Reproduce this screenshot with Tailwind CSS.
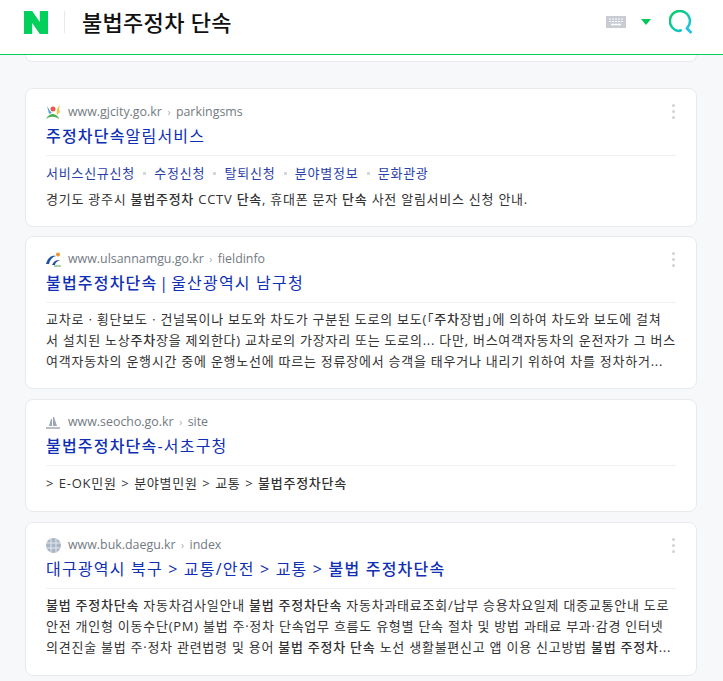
<!DOCTYPE html>
<html lang="ko">

<head>
    <meta charset="UTF-8" />
    <meta name="viewport" content="width=device-width, initial-scale=1.0" />
    <title>불법주정차 단속</title>
    <script src="https://cdn.jsdelivr.net/npm/@tailwindcss/browser@4"></script>
</head>

<body class="bg-[#f7f8fa] h-[681px] overflow-hidden font-['Open_Sans','Noto_Sans_CJK_KR',sans-serif] text-[#333]">

    <!-- Header -->
    <header class="h-[55px] bg-white border-b border-[#03cf5d] flex items-center pl-[24px] pr-[30px] pb-[10px]">
        <svg class="w-[24px] h-[23px]" viewBox="0 0 24 23"><path d="M0 0h8.2l7.6 11V0H24v23h-8.200L8.200 12v11H0z" fill="#03cf5d" /></svg>
        <div class="w-px h-[22px] bg-[#e8e9eb] ml-[16px] mr-[17px]"></div>
        <h1 class="text-[22px] font-medium text-[#111] tracking-[0.3px] flex-1">불법주정차 단속</h1>
        <svg class="w-[20px] h-[12px] mr-[15px]" viewBox="0 0 20 12">
            <rect width="20" height="12" fill="#c9ccd2" />
            <path d="M3 3h14M3 5.500h14" stroke="#fff" stroke-width="1" stroke-dasharray="2 1" />
            <path d="M5 8.500h10" stroke="#fff" stroke-width="1.500" />
        </svg>
        <svg class="w-[10px] h-[6px] mr-[18px]" viewBox="0 0 10 6"><path d="M0 0h10L5 6z" fill="#03c75a" /></svg>
        <svg class="w-[24px] h-[24px]" viewBox="0 0 24 24">
            <defs>
                <linearGradient id="searchGrad" x1="0" y1="0" x2="1" y2="1">
                    <stop offset="0" stop-color="#03cf5d" />
                    <stop offset="1" stop-color="#1ec0e8" />
                </linearGradient>
            </defs>
            <path d="M11 21A10 10 0 1 1 18.500 17.500" fill="none" stroke="url(#searchGrad)" stroke-width="2.500" />
            <circle cx="11.500" cy="20.500" r="1.400" fill="#16c4b0" />
            <path d="M17 17.500l5.500 5.500" stroke="#1ec0e8" stroke-width="2.500" />
        </svg>
    </header>

    <main class="pl-[25px] pr-[26px]">
        <!-- Card scrolled off the top -->
        <div class="h-[7px] bg-white border border-t-0 border-[#e8eaee] rounded-b-[8px]"></div>

        <!-- gjcity -->
        <section class="relative h-[139px] mt-[26px] bg-white border border-[#e8eaee] rounded-[8px] pt-[13px] px-[20px]">
            <div class="flex items-center h-[20px] text-[12.400px] text-[#737a82]">
                <svg class="w-[15px] h-[15px] mr-[7px]" viewBox="0 0 15 15">
                    <path d="M1 1c2 3 3 5 5 7L3 9z" fill="#5aa9d6" />
                    <path d="M14 0c-3 3-4 6-3 10l3-3c-1-2-1-4 0-7z" fill="#e8c84a" />
                    <circle cx="7" cy="4" r="2.500" fill="#e8584f" />
                    <path d="M0 14c3-5 8-7 12-2 1 1 1 2 1 2-4-3-9-3-13 0z" fill="#4caf50" />
                </svg>
                <span>www.gjcity.go.kr</span><span class="mx-[5.500px] text-[10px] text-[#aaa]">›</span><span>parkingsms</span>
            </div>
            <h2 class="mt-[2px] text-[16px] leading-[24px] text-[#0f2fb5] tracking-[1.2px]"><b class="font-medium">주정차단속</b>알림서비스</h2>
            <div class="mt-[7px] border-t border-[#f0f1f3] pt-[4px] flex items-center h-[32px] text-[13px] text-[#2b3fa8] tracking-[0.75px]">
                <span>서비스신규신청</span><i class="w-[3px] h-[3px] bg-[#d5d7db] mx-[8.200px]"></i>
                <span>수정신청</span><i class="w-[3px] h-[3px] bg-[#d5d7db] mx-[8.200px]"></i>
                <span>탈퇴신청</span><i class="w-[3px] h-[3px] bg-[#d5d7db] mx-[8.200px]"></i>
                <span>분야별정보</span><i class="w-[3px] h-[3px] bg-[#d5d7db] mx-[8.200px]"></i>
                <span>문화관광</span>
            </div>
            <p class="text-[13px] leading-[24px] tracking-[0.75px] whitespace-nowrap">경기도 광주시 <b class="font-medium">불법주정차</b> CCTV <b class="font-medium">단속</b>, 휴대폰 문자 <b class="font-medium">단속</b> 사전 알림서비스 신청 안내.</p>
            <div class="absolute right-[21px] top-[15px] flex flex-col gap-[3px]"><i class="w-[3px] h-[3px] rounded-full bg-[#d0d2d6]"></i><i class="w-[3px] h-[3px] rounded-full bg-[#d0d2d6]"></i><i class="w-[3px] h-[3px] rounded-full bg-[#d0d2d6]"></i></div>
        </section>

        <!-- ulsannamgu -->
        <section class="relative h-[153px] mt-[9px] bg-white border border-[#e8eaee] rounded-[8px] pt-[12px] px-[20px]">
            <div class="flex items-center h-[20px] text-[12.400px] text-[#737a82]">
                <svg class="w-[15px] h-[15px] mr-[7px]" viewBox="0 0 15 15">
                    <path d="M0 12C2 5 6 3 10 4 6 5 4 8 3 12z" fill="#1f4fa0" />
                    <path d="M6 13c2-4 4-5 8-5-3 1-5 3-5 5z" fill="#1f4fa0" />
                    <circle cx="12" cy="2.500" r="2" fill="#f0932b" />
                    <path d="M8 14h7" stroke="#4caf50" />
                </svg>
                <span>www.ulsannamgu.go.kr</span><span class="mx-[5.500px] text-[10px] text-[#aaa]">›</span><span>fieldinfo</span>
            </div>
            <h2 class="mt-[2px] text-[16px] leading-[24px] text-[#0f2fb5] tracking-[1.2px]"><b class="font-medium">불법주정차단속</b><span class="[word-spacing:-3.500px]"> | 울산광역시</span> 남구청</h2>
            <div class="mt-[7px] border-t border-[#f0f1f3] pt-[6px] text-[13px] leading-[21px] tracking-[0.75px] whitespace-nowrap">
                <p>교차로ㆍ횡단보도ㆍ건널목이나 보도와 차도가 구분된 도로의 보도(｢<b class="font-medium">주차</b>장법｣에 의하여 차도와 보도에 걸쳐</p>
                <p>서 설치된 노상<b class="font-medium">주차</b>장을 제외한다) 교차로의 가장자리 또는 도로의... 다만, 버스여객자동차의 운전자가 그 버스</p>
                <p>여객자동차의 운행시간 중에 운행노선에 따르는 정류장에서 승객을 태우거나 내리기 위하여 차를 정차하거...</p>
            </div>
            <div class="absolute right-[21px] top-[15px] flex flex-col gap-[3px]"><i class="w-[3px] h-[3px] rounded-full bg-[#d0d2d6]"></i><i class="w-[3px] h-[3px] rounded-full bg-[#d0d2d6]"></i><i class="w-[3px] h-[3px] rounded-full bg-[#d0d2d6]"></i></div>
        </section>

        <!-- seocho -->
        <section class="relative h-[113px] mt-[10px] bg-white border border-[#e8eaee] rounded-[8px] pt-[12px] px-[20px]">
            <div class="flex items-center h-[20px] text-[12.400px] text-[#737a82]">
                <svg class="w-[15px] h-[15px] mr-[7px]" viewBox="0 0 15 15">
                    <path d="M3 11l2-7h1v7zM7 11V2l1 0 3 9z" fill="#9aa6b8" />
                    <path d="M0 13h14" stroke="#b9bec6" stroke-width="2" />
                </svg>
                <span>www.seocho.go.kr</span><span class="mx-[5.500px] text-[10px] text-[#aaa]">›</span><span>site</span>
            </div>
            <h2 class="mt-[2px] text-[16px] leading-[24px] text-[#0f2fb5] tracking-[1.2px]"><b class="font-medium">불법주정차단속</b>-서초구청</h2>
            <div class="mt-[7px] border-t border-[#f0f1f3] pt-[5px] text-[13px] leading-[24px] tracking-[0.75px] [word-spacing:0.500px] whitespace-nowrap">&gt; E-OK민원 &gt; 분야별민원 &gt; 교통 &gt; <b class="font-medium">불법주정차단속</b></div>
        </section>

        <!-- buk.daegu -->
        <section class="relative h-[154px] mt-[10px] bg-white border border-[#e8eaee] rounded-[8px] pt-[12px] px-[20px]">
            <div class="flex items-center h-[20px] text-[12.400px] text-[#737a82]">
                <svg class="w-[15px] h-[15px] mr-[7px]" viewBox="0 0 15 15">
                    <circle cx="7.500" cy="7.500" r="7.500" fill="#a9b6c6" />
                    <path d="M0 5h15M0 10h15M5 0v15M10 0v15" stroke="#e4e9ef" stroke-width="1" />
                </svg>
                <span>www.buk.daegu.kr</span><span class="mx-[5.500px] text-[10px] text-[#aaa]">›</span><span>index</span>
            </div>
            <h2 class="mt-[2px] text-[16px] leading-[24px] text-[#0f2fb5] tracking-[1.2px]">대구광역시 북구 &gt; 교통/안전 &gt; 교통 &gt; <b class="font-medium">불법 주정차단속</b></h2>
            <div class="mt-[7px] border-t border-[#f0f1f3] pt-[6px] text-[13px] leading-[21px] tracking-[0.75px] whitespace-nowrap">
                <p><b class="font-medium">불법 주정차단속</b> 자동차검사일안내 <b class="font-medium">불법 주정차단속</b> 자동차과태료조회/납부 승용차요일제 대중교통안내 도로</p>
                <p>안전 개인형 이동수단(PM) 불법 주·정차 단속업무 흐름도 유형별 단속 절차 및 방법 과태료 부과·감경 인터넷</p>
                <p>의견진술 불법 주·정차 관련법령 및 용어 <b class="font-medium">불법 주정차 단속</b> 노선 생활불편신고 앱 이용 신고방법 <b class="font-medium">불법 주정차</b>...</p>
            </div>
            <div class="absolute right-[21px] top-[15px] flex flex-col gap-[3px]"><i class="w-[3px] h-[3px] rounded-full bg-[#d0d2d6]"></i><i class="w-[3px] h-[3px] rounded-full bg-[#d0d2d6]"></i><i class="w-[3px] h-[3px] rounded-full bg-[#d0d2d6]"></i></div>
        </section>
    </main>
</body>

</html>
